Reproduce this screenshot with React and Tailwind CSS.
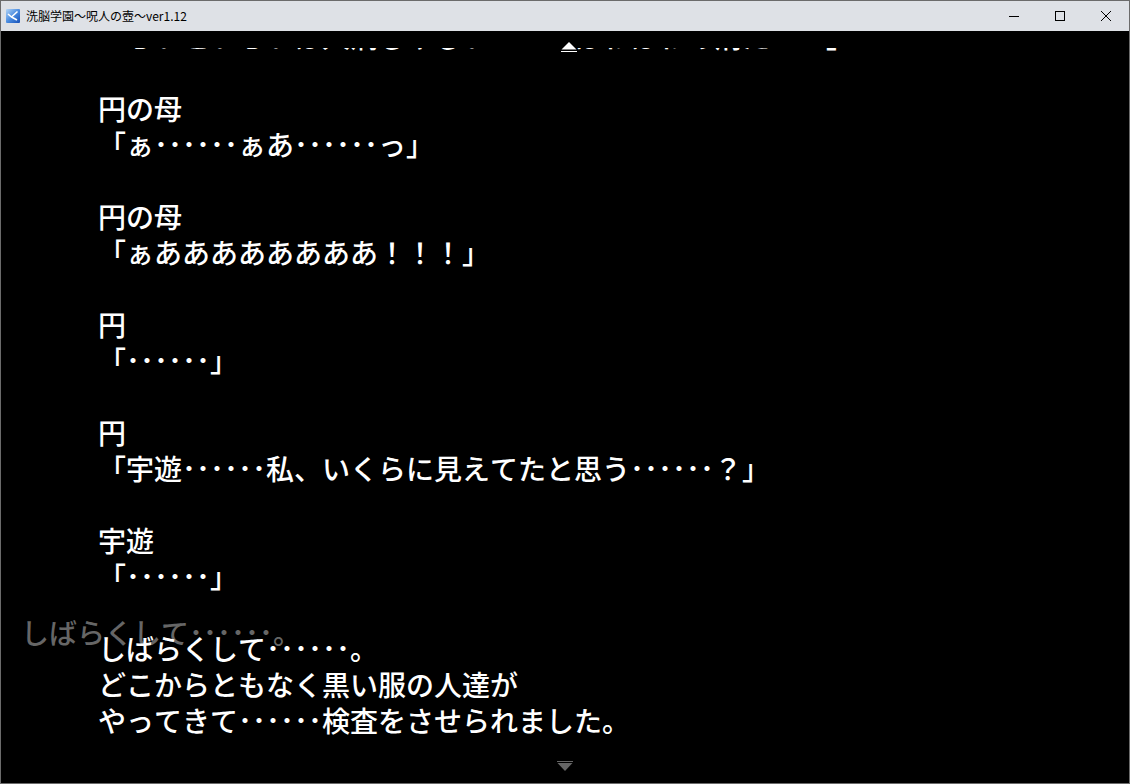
import React from "react";

const LOG = [
  "「ちいといちいは人病しやしい･･････はわはわの消た････」",
  "",
  "円の母",
  "「ぁ･･････ぁあ･･････っ」",
  "",
  "円の母",
  "「ぁああああああああ！！！」",
  "",
  "円",
  "「･･････」",
  "",
  "円",
  "「宇遊･･････私、いくらに見えてたと思う･･････？」",
  "",
  "宇遊",
  "「･･････」",
  "",
  "しばらくして･･････。",
  "どこからともなく黒い服の人達が",
  "やってきて･･････検査をさせられました。",
];

const AppIcon = () => (
  <svg viewBox="0 0 14 14" className="h-3.5 w-3.5 shrink-0" aria-hidden="true">
    <defs>
      <linearGradient id="iconFill" x1="0" y1="0" x2="1" y2="1">
        <stop offset="0" stopColor="#b4d5f6" />
        <stop offset="0.5" stopColor="#4a8ce0" />
        <stop offset="1" stopColor="#1550b8" />
      </linearGradient>
    </defs>
    <rect width="14" height="14" rx="1" fill="url(#iconFill)" />
    <path d="M2 5L5.5 8L11.5 2.5M5.5 8L11 11" fill="none" stroke="#fff" strokeWidth="1.6" />
  </svg>
);

const TitleBar = () => (
  <header className="flex h-[30px] items-center justify-between bg-[#dee1e6] text-black">
    <div className="flex items-center gap-1.5 pl-[5px]">
      <AppIcon />
      <h1 className="text-xs whitespace-nowrap">洗脳学園～呪人の壺～ver1.12</h1>
    </div>
    <div className="flex h-full">
      <button type="button" aria-label="Minimize" className="flex w-[46px] items-center justify-center">
        <svg viewBox="0 0 10 10" className="h-2.5 w-2.5" shapeRendering="crispEdges">
          <path d="M0 5.5H10" stroke="#000" />
        </svg>
      </button>
      <button type="button" aria-label="Maximize" className="flex w-[46px] items-center justify-center">
        <svg viewBox="0 0 10 10" className="h-2.5 w-2.5" shapeRendering="crispEdges">
          <path d="M.5 .5H9.5V9.5H.5Z" fill="none" stroke="#000" />
        </svg>
      </button>
      <button type="button" aria-label="Close" className="flex w-[46px] items-center justify-center">
        <svg viewBox="0 0 10 10" className="h-2.5 w-2.5">
          <path d="M0 0L10 10M10 0L0 10" stroke="#000" />
        </svg>
      </button>
    </div>
  </header>
);

const App = () => {
  return (
    <div className="flex min-h-screen flex-col border border-[#6b6b6b] bg-black font-['Noto_Sans_CJK_JP',sans-serif]">
      <TitleBar />
      <main className="relative flex-1 pt-[17px] text-[28px] leading-9 font-medium text-white [font-kerning:none]">
        {/* message still on screen behind the backlog */}
        <p className="absolute bottom-[133px] left-5 whitespace-nowrap text-[#666]">
          しばらくして･･････。
        </p>

        {/* backlog, scrolled to the newest line */}
        <div className="relative flex h-[690px] flex-col justify-end overflow-hidden pl-[97px]">
          {LOG.map((line, i) => (
            <p key={i} className="h-9 shrink-0 whitespace-pre">{line}</p>
          ))}
        </div>

        <button type="button" aria-label="Scroll up" className="absolute top-[11px] left-1/2 -ml-1 flex">
          <svg viewBox="0 0 16 10" className="h-2.5 w-4">
            <path d="M8 0L15.5 7.5H.5Z" fill="#fff" />
            <path d="M0 9.5H16" stroke="#fff" />
          </svg>
        </button>
        <button type="button" aria-label="Scroll down" className="absolute bottom-3 left-1/2 flex -translate-x-1/2">
          <svg viewBox="0 0 16 10" className="h-2.5 w-4">
            <path d="M0 .5H16" stroke="#666" />
            <path d="M.5 2H15.5L8 10Z" fill="#666" />
          </svg>
        </button>
      </main>
    </div>
  );
};

export default App;
